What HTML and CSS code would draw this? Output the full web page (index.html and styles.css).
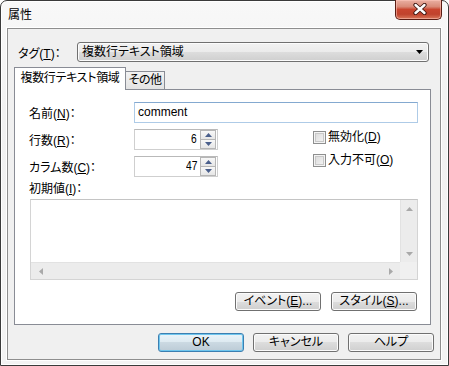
FILE: index.html
```html
<!DOCTYPE html>
<html lang="ja">
<head>
<meta charset="utf-8">
<title>属性</title>
<link rel="stylesheet" href="styles.css">
</head>
<body>
<div class="window">
  <div class="titlebar">
    <span class="title">属性</span>
    <div class="close">
      <svg width="14" height="12" viewBox="0 0 14 12">
        <path d="M2.5 2 L11.5 10 M11.5 2 L2.5 10" stroke="#3a1410" stroke-width="4.2" stroke-linecap="round" fill="none"/>
        <path d="M2.5 2 L11.5 10 M11.5 2 L2.5 10" stroke="#ffffff" stroke-width="2.4" stroke-linecap="round" fill="none"/>
      </svg>
    </div>
  </div>
  <div class="client">
    <div class="tag-row">
      <span class="tag-label">タグ(<u>T</u>)：</span>
      <div class="combo">
        <span>複数行テキスト領域</span>
        <svg class="combo-arrow" width="7" height="4" viewBox="0 0 7 4"><path d="M0 0 H7 L3.5 4 Z" fill="#000"/></svg>
      </div>
    </div>
    <div class="tabs">
      <div class="tab active">複数行テキスト領域</div>
      <div class="tab other">その他</div>
    </div>
    <div class="panel">
      <div class="row">
        <span class="label">名前(<u>N</u>)：</span>
        <div class="edit">comment</div>
      </div>
      <div class="mid">
        <div class="spin-col">
          <div class="row">
            <span class="label">行数(<u>R</u>)：</span>
            <div class="spin">
              <span class="spin-val">6</span>
              <div class="spin-btns">
                <div class="spin-btn"><svg width="7" height="4" viewBox="0 0 7 4"><path d="M3.5 0 L7 4 H0 Z" fill="#4a5f8c"/></svg></div>
                <div class="spin-btn"><svg width="7" height="4" viewBox="0 0 7 4"><path d="M0 0 H7 L3.5 4 Z" fill="#4a5f8c"/></svg></div>
              </div>
            </div>
          </div>
          <div class="row">
            <span class="label">カラム数(<u>C</u>)：</span>
            <div class="spin">
              <span class="spin-val">47</span>
              <div class="spin-btns">
                <div class="spin-btn"><svg width="7" height="4" viewBox="0 0 7 4"><path d="M3.5 0 L7 4 H0 Z" fill="#4a5f8c"/></svg></div>
                <div class="spin-btn"><svg width="7" height="4" viewBox="0 0 7 4"><path d="M0 0 H7 L3.5 4 Z" fill="#4a5f8c"/></svg></div>
              </div>
            </div>
          </div>
        </div>
        <div class="check-col">
          <div class="check"><span class="box"></span>無効化(<u>D</u>)</div>
          <div class="check"><span class="box"></span>入力不可(<u>O</u>)</div>
        </div>
      </div>
      <div class="init-label">初期値(<u>I</u>)：</div>
      <div class="textarea">
        <div class="ta-body">
          <div class="ta-text"></div>
          <div class="vscroll">
            <svg width="7" height="4" viewBox="0 0 7 4"><path d="M3.5 0 L7 4 H0 Z" fill="#a9a9a9"/></svg>
            <svg width="7" height="4" viewBox="0 0 7 4"><path d="M0 0 H7 L3.5 4 Z" fill="#a9a9a9"/></svg>
          </div>
        </div>
        <div class="ta-foot">
          <div class="hscroll">
            <svg width="4" height="7" viewBox="0 0 4 7"><path d="M0 3.5 L4 0 V7 Z" fill="#a9a9a9"/></svg>
            <svg width="4" height="7" viewBox="0 0 4 7"><path d="M4 3.5 L0 0 V7 Z" fill="#a9a9a9"/></svg>
          </div>
          <div class="corner"></div>
        </div>
      </div>
      <div class="panel-buttons">
        <div class="btn">イベント(<u>E</u>)...</div>
        <div class="btn">スタイル(<u>S</u>)...</div>
      </div>
    </div>
    <div class="footer">
      <div class="btn default">OK</div>
      <div class="btn">キャンセル</div>
      <div class="btn">ヘルプ</div>
    </div>
  </div>
</div>
</body>
</html>
```

FILE: styles.css
```css
html, body {
  margin: 0;
  padding: 0;
  background: #ffffff;
}

body {
  width: 449px;
  height: 366px;
  overflow: hidden;
  font-family: "Liberation Sans", "Noto Sans CJK JP", sans-serif;
  font-size: 12px;
  font-feature-settings: "palt";
  color: #000;
  white-space: nowrap;
}

u {
  text-decoration: underline;
  text-underline-offset: 1px;
}

.window {
  box-sizing: border-box;
  width: 449px;
  height: 366px;
  border: 1px solid #3a3a3a;
  border-radius: 7px 7px 0 0;
  background: linear-gradient(#f8f8f8, #f1f1f1 30%, #f3f3f3);
  box-shadow: inset 0 0 0 1px #ffffff;
  display: flex;
  flex-direction: column;
  padding: 0 7px 5px 6px;
}

.titlebar {
  height: 27px;
  flex: none;
  display: flex;
  justify-content: space-between;
  align-items: flex-start;
}

.title {
  margin-top: 6px;
  margin-left: 1px;
  line-height: 16px;
  font-size: 12px;
  color: #000;
}

.close {
  box-sizing: border-box;
  width: 47px;
  height: 20px;
  margin-top: -1px;
  margin-right: -1px;
  border: 1px solid #5a1d14;
  border-top: none;
  border-radius: 0 0 5px 5px;
  background: linear-gradient(#eab0a3 0%, #d98a78 35%, #c9452f 50%, #c0432d 75%, #d9775a 100%);
  box-shadow: inset 0 0 0 1px rgba(255, 200, 190, 0.55);
  display: flex;
  align-items: center;
  justify-content: center;
}

.close svg {
  margin-top: -1px;
  margin-left: 2px;
}

.client {
  flex: 1;
  box-sizing: border-box;
  border: 1px solid #8e8e8e;
  box-shadow: 0 0 0 1px #ffffff;
  background: #f0f0f0;
  display: flex;
  flex-direction: column;
}

.tag-row {
  display: flex;
  align-items: center;
  margin-top: 13px;
  padding-left: 10px;
  height: 20px;
}

.tag-label {
  width: 59px;
  flex: none;
}

.combo {
  box-sizing: border-box;
  width: 352px;
  height: 20px;
  border: 1px solid #707070;
  border-radius: 3px;
  background: linear-gradient(#f2f2f2 0%, #ebebeb 50%, #dddddd 50%, #cfcfcf 100%);
  box-shadow: inset 0 0 0 1px #fcfcfc;
  display: flex;
  align-items: center;
  justify-content: space-between;
  padding: 0 5px 0 4px;
  line-height: 16px;
}

.tabs {
  display: flex;
  align-items: flex-end;
  margin-top: 5px;
  margin-left: 6px;
  height: 22px;
  position: relative;
  z-index: 1;
}

.tab {
  box-sizing: border-box;
  border: 1px solid #898c95;
  border-bottom: none;
  text-align: center;
  overflow: visible;
}

.tab.active {
  width: 112px;
  height: 23px;
  margin-bottom: -1px;
  background: #ffffff;
  line-height: 20px;
  letter-spacing: -0.3px;
}

.tab.other {
  width: 40px;
  height: 18px;
  margin-left: -1px;
  background: linear-gradient(#f2f2f2, #e3e3e3);
  line-height: 17px;
  letter-spacing: -0.6px;
}

.panel {
  box-sizing: border-box;
  width: 417px;
  height: 236px;
  margin-left: 6px;
  border: 1px solid #898c95;
  background: #ffffff;
  padding: 12px 12px 0 14px;
  display: flex;
  flex-direction: column;
}

.row {
  display: flex;
  align-items: center;
  height: 21px;
}

.label {
  width: 105px;
  flex: none;
}

.edit {
  box-sizing: border-box;
  width: 284px;
  height: 21px;
  border: 1px solid #aecbe7;
  border-top-color: #84a9d0;
  background: #fff;
  padding-left: 3px;
  line-height: 19px;
  font-size: 12px;
}

.mid {
  display: flex;
  margin-top: 6px;
}

.spin-col {
  display: flex;
  flex-direction: column;
  gap: 6px;
}

.spin {
  box-sizing: border-box;
  width: 84px;
  height: 21px;
  border: 1px solid #cfcfcf;
  border-top-color: #b9b9b9;
  background: #fff;
  display: flex;
  align-items: center;
  justify-content: flex-end;
  padding-right: 1px;
}

.spin-val {
  font-size: 12px;
  margin-right: 3px;
  line-height: 17px;
  transform: scaleX(0.85);
  transform-origin: right center;
}

.spin-btns {
  display: flex;
  flex-direction: column;
  width: 16px;
  height: 19px;
}

.spin-btn {
  box-sizing: border-box;
  flex: 1;
  border: 1px solid #b6b6b6;
  background: linear-gradient(#f8f8f8, #e6e6e6);
  display: flex;
  align-items: center;
  justify-content: center;
}

.spin-btn + .spin-btn {
  border-top: none;
}

.check-col {
  margin-left: 95px;
  display: flex;
  flex-direction: column;
  gap: 8px;
  padding-top: 1px;
}

.check {
  display: flex;
  align-items: center;
  height: 15px;
  line-height: 15px;
}

.box {
  box-sizing: border-box;
  width: 13px;
  height: 13px;
  border: 1px solid #8e8f8f;
  background: linear-gradient(135deg, #d8d8d8, #f6f6f6);
  box-shadow: inset 0 0 0 1px #f4f4f4, inset 0 0 0 2px #c8c8c8;
  margin-right: 2px;
  flex: none;
}

.init-label {
  margin-top: 5px;
  line-height: 15px;
  height: 15px;
}

.textarea {
  box-sizing: border-box;
  margin-top: 2px;
  margin-left: 1px;
  width: 388px;
  height: 81px;
  border: 1px solid #d4d4d4;
  border-top-color: #c4c4c4;
  background: #fff;
  display: flex;
  flex-direction: column;
}

.ta-body {
  flex: 1;
  display: flex;
}

.ta-text {
  flex: 1;
}

.vscroll {
  width: 17px;
  background: #ececec;
  border-left: 1px solid #e2e2e2;
  box-sizing: border-box;
  display: flex;
  flex-direction: column;
  justify-content: space-between;
  align-items: center;
  padding: 7px 0 6px;
}

.ta-foot {
  height: 17px;
  display: flex;
}

.hscroll {
  flex: 1;
  background: #ececec;
  border-top: 1px solid #e2e2e2;
  box-sizing: border-box;
  display: flex;
  justify-content: space-between;
  align-items: center;
  padding: 0 7px 0 8px;
}

.corner {
  width: 17px;
  background: #f0f0f0;
}

.panel-buttons {
  display: flex;
  justify-content: flex-end;
  gap: 10px;
  margin-top: 12px;
  margin-right: 1px;
}

.btn {
  box-sizing: border-box;
  width: 86px;
  height: 19px;
  border: 1px solid #707070;
  border-radius: 3px;
  background: linear-gradient(#f2f2f2 0%, #ebebeb 50%, #dddddd 50%, #cfcfcf 100%);
  box-shadow: inset 0 0 0 1px #fbfbfb;
  display: flex;
  align-items: center;
  justify-content: center;
  line-height: 15px;
  font-size: 12px;
}

.btn.default {
  border-color: #3c7fb1;
  background: linear-gradient(#e9f4fa 0%, #dde9f0 50%, #cbd9e2 50%, #bccbd6 100%);
  box-shadow: inset 0 0 0 1px #6fc6ee;
}

.footer {
  display: flex;
  justify-content: flex-end;
  gap: 9px;
  margin-top: 8px;
  padding-right: 6px;
}
```
